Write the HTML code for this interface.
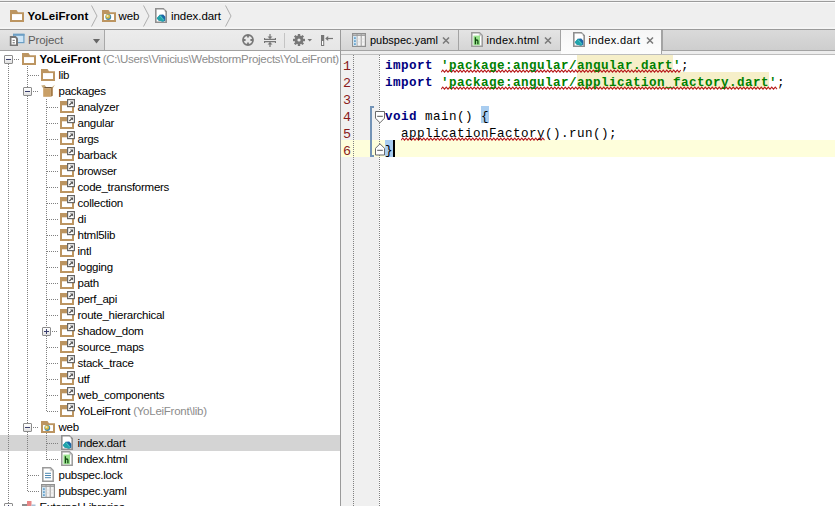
<!DOCTYPE html>
<html><head><meta charset="utf-8">
<style>
*{margin:0;padding:0;box-sizing:border-box}
html,body{width:835px;height:506px;overflow:hidden;background:#fff;font-family:"Liberation Sans",sans-serif;font-size:11px;color:#000}
.a{position:absolute}
#top{left:0;top:0;width:835px;height:29px;background:#efefef}
#top:before{content:"";position:absolute;left:0;top:1px;width:835px;height:1px;background:#9b9b9b}
#top:after{content:"";position:absolute;left:0;top:2px;width:835px;height:1px;background:#fbfbfb}
.bc{top:9px;font-size:11.5px;line-height:14px;white-space:nowrap;color:#000;letter-spacing:-0.05px}
#l29{left:0;top:29px;width:835px;height:1px;background:#9a9a9a}
#phead{left:0;top:30px;width:340px;height:20px;background:linear-gradient(#ececec,#e6e6e6)}
#pbtn{left:0;top:30px;width:104px;height:20px;background:linear-gradient(#e4e4e4,#d6d6d6)}
#l50{left:0;top:50px;width:340px;height:1px;background:#a0a0a0}
#vsep{left:340px;top:30px;width:1px;height:476px;background:#9a9a9a}
#tree{left:0;top:51px;width:340px;height:455px;background:#fff}
.tt{line-height:16px;white-space:nowrap;color:#000;font-size:11.5px;letter-spacing:-0.25px}
.gray{color:#8c8c8c}
.sel{background:#d4d4d4}
.dv{width:1px;background:repeating-linear-gradient(to bottom,#808080 0 1px,transparent 1px 2px)}
.dh{height:1px;background:repeating-linear-gradient(to right,#808080 0 1px,transparent 1px 2px)}
.exp{position:absolute;width:9px;height:9px;border:1px solid #8c8c8c;background:linear-gradient(#fff,#e2e2e2);border-radius:1px}
.exp:before{content:"";position:absolute;left:1px;top:3px;width:5px;height:1px;background:#3a3f6e}
.exp.plus:after{content:"";position:absolute;left:3px;top:1px;width:1px;height:5px;background:#3a3f6e}
#tabs{left:341px;top:30px;width:494px;height:20px;background:linear-gradient(#e2e2e2,#d8d8d8)}
.tab{top:30px;height:21px;background:linear-gradient(#e4e4e4,#d5d5d5);border-right:1px solid #a3a3a3;border-bottom:1px solid #a3a3a3}
.tab.act{background:linear-gradient(#f6f6f6,#fdfdfd);height:25px;border-bottom:none}
.tabt{top:33px;line-height:14px;white-space:nowrap;color:#000}



#code{left:380px;top:55px;width:455px;height:451px;background:#fff}
.ln{position:absolute;left:343px;width:10px;font-family:"Liberation Mono",monospace;font-size:13.4px;letter-spacing:0;line-height:17px;padding-top:3px;color:#8a1a1a}
.cl{position:absolute;left:385px;font-family:"Liberation Mono",monospace;font-size:12.6px;letter-spacing:0.44px;line-height:17px;padding-top:3px;white-space:pre;color:#000}
.kw{color:#000080;font-weight:bold}
.str{color:#008000;font-weight:bold}
.ref{background:#f5eec6}
.wavy{text-decoration:underline wavy #e03030;text-decoration-thickness:1px;text-underline-offset:2px}
.tt.b{font-weight:bold;letter-spacing:0.1px}
.tt.b .gray{font-weight:normal;letter-spacing:-0.3px;margin-left:-1px}
.tab.empty{background:linear-gradient(#dadada,#cecece)}

</style></head><body>
<div id="top" class="a"></div>
<div class="a" style="left:0;top:27px;width:835px;height:2px;background:linear-gradient(#f3f3f3,#f6f6f6)"></div>
<div id="l29" class="a"></div>
<div id="phead" class="a"></div>
<div id="pbtn" class="a"></div>
<div id="l50" class="a"></div>
<div id="tree" class="a"></div>
<div id="vsep" class="a"></div>
<div id="code" class="a"></div>
<svg class="a" style="left:10px;top:10px" width="14" height="12" viewBox="0 0 14 12"><path d="M0 0H6.5L8 2.3H14V12H0Z" fill="#bc9561"/><rect x="2" y="4.1" width="10" height="5.9" fill="#fff"/></svg><div class="a bc" style="left:27.5px;font-weight:bold;letter-spacing:0.1px">YoLeiFront</div><svg class="a" style="left:91px;top:5px" width="7" height="22" viewBox="0 0 7 22"><path d="M0.5 0.5L6 11L0.5 21.5" stroke="#a8a8a8" fill="none" stroke-width="0.9"/></svg><svg class="a" style="left:102px;top:10px" width="14" height="12" viewBox="0 0 14 12"><path d="M0 0H6.5L8 2.3H14V12H0Z" fill="#bc9561"/><rect x="2" y="4.1" width="10" height="5.9" fill="#fff"/><circle cx="6.3" cy="7" r="2.9" fill="#3d86ad"/><circle cx="5.9" cy="6.5" r="2.3" fill="#d4b843"/><circle cx="5.5" cy="6" r="1.1" fill="#f6eebb"/></svg><div class="a bc" style="left:118.5px">web</div><svg class="a" style="left:143px;top:5px" width="7" height="22" viewBox="0 0 7 22"><path d="M0.5 0.5L6 11L0.5 21.5" stroke="#a8a8a8" fill="none" stroke-width="0.9"/></svg><svg class="a" style="left:155px;top:8px" width="12" height="15" viewBox="0 0 12 15"><path d="M0.8 0.8H8.3L11.2 3.7V14.2H0.8Z" fill="#fff" stroke="#8f8f8f" stroke-width="1.6"/><rect x="8.2" y="1.7" width="1.3" height="1.3" fill="#fff"/><path d="M1.8 10.3L4.8 6.8L8.2 6.5L10.3 8.8L10.3 12.8L7.5 13.5L3.6 12.6Z" fill="#1b64a8"/><path d="M1.8 10.3L4.8 6.8L6.2 7.5L9.2 11.2L9 13.4L7.5 13.5L3.6 12.6Z" fill="#22a5a9"/><path d="M5 7.8L8.8 12.2" stroke="#5fc8d8" stroke-width="0.7"/></svg><div class="a bc" style="left:171px">index.dart</div><svg class="a" style="left:225px;top:5px" width="7" height="22" viewBox="0 0 7 22"><path d="M0.5 0.5L6 11L0.5 21.5" stroke="#a8a8a8" fill="none" stroke-width="0.9"/></svg><svg class="a" style="left:9px;top:33px" width="16" height="14" viewBox="0 0 16 14"><rect x="4.6" y="1.4" width="10.3" height="8.2" fill="#cde5f7" stroke="#6b9ec4" stroke-width="1.2"/><rect x="4" y="0.8" width="11.5" height="2" fill="#6b9ec4"/><path d="M0.8 3H6.8L9 5.2V13H0.8Z" fill="#777"/><path d="M2.5 5H6.3L7 5.8V11.5H2.5Z" fill="#fff"/><rect x="3.6" y="6.8" width="2.2" height="1.1" fill="#777"/><rect x="3.6" y="9.2" width="2.2" height="1.1" fill="#777"/></svg><div class="a" style="left:28px;top:33px;line-height:14px;font-size:11.5px;letter-spacing:-0.1px;color:#5c5c5c">Project</div><svg class="a" style="left:93px;top:39px" width="7" height="5" viewBox="0 0 7 5"><path d="M0 0H7L3.5 4.5Z" fill="#666"/></svg><div class="a" style="left:104px;top:30px;width:1px;height:20px;background:#a8a8a8"></div><svg class="a" style="left:242px;top:34px" width="12" height="12" viewBox="0 0 12 12"><circle cx="6" cy="6" r="5" fill="none" stroke="#777" stroke-width="1.8"/><path d="M6 1V3.6M6 8.4V11M1 6H3.6M8.4 6H11" stroke="#777" stroke-width="1.8"/></svg><svg class="a" style="left:264px;top:34px" width="12" height="13" viewBox="0 0 12 13"><path d="M0.5 4V5.3H11.5V4M0.5 9V7.7H11.5V9" stroke="#777" stroke-width="1.2" fill="none"/><path d="M6 0V4.5M6 8.5V13" stroke="#777" stroke-width="1.2"/><path d="M3.5 2.5L6 5L8.5 2.5ZM3.5 10.5L6 8L8.5 10.5Z" fill="#777"/></svg><div class="a" style="left:284px;top:33px;width:1px;height:15px;background:#c4c4c4"></div><svg class="a" style="left:293px;top:34px" width="20" height="12" viewBox="0 0 20 12"><g fill="#777"><circle cx="6" cy="6" r="4.4"/><rect x="4.8" y="0" width="2.4" height="12" transform="rotate(0 6 6)"/><rect x="4.8" y="0" width="2.4" height="12" transform="rotate(45 6 6)"/><rect x="4.8" y="0" width="2.4" height="12" transform="rotate(90 6 6)"/><rect x="4.8" y="0" width="2.4" height="12" transform="rotate(135 6 6)"/></g><circle cx="6" cy="6" r="1.6" fill="#e8e8e8"/><path d="M14.5 5H19L16.75 7.5Z" fill="#777"/></svg><svg class="a" style="left:321px;top:35px" width="13" height="11" viewBox="0 0 13 11"><rect x="0" y="0" width="3.2" height="11" fill="#777"/><rect x="1" y="6" width="1.2" height="4" fill="#fff"/><path d="M5 3.5H12" stroke="#777" stroke-width="1.2"/><path d="M4.2 3.5L7.2 1V6Z" fill="#777"/></svg><div class="a" style="left:0;top:51px;width:340px;height:455px;overflow:hidden"><div class="a" style="left:0;top:-51px;width:340px;height:506px"><div class="a sel" style="left:0;top:435px;width:340px;height:16px"></div>
<div class="a dv" style="left:8px;top:64px;height:439px"></div>
<div class="a dv" style="left:27px;top:66px;height:21px"></div>
<div class="a dv" style="left:27px;top:96px;height:327px"></div>
<div class="a dv" style="left:27px;top:432px;height:60px"></div>
<div class="a dv" style="left:46px;top:99px;height:228px"></div>
<div class="a dv" style="left:46px;top:336px;height:76px"></div>
<div class="a dv" style="left:46px;top:433px;height:27px"></div>
<div class="exp" style="left:4px;top:55px"></div>
<div class="a dh" style="left:14px;top:59px;width:5px"></div>
<svg class="a" style="left:22px;top:53px" width="14" height="12" viewBox="0 0 14 12"><path d="M0 0H6.5L8 2.3H14V12H0Z" fill="#bc9561"/><rect x="2" y="4.1" width="10" height="5.9" fill="#fff"/></svg>
<div class="a tt b" style="left:39.5px;top:51px">YoLeiFront <span class="gray">(C:\Users\Vinicius\WebstormProjects\YoLeiFront)</span></div>
<div class="a dh" style="left:28px;top:75px;width:11px"></div>
<svg class="a" style="left:41px;top:69px" width="14" height="12" viewBox="0 0 14 12"><path d="M0 0H6.5L8 2.3H14V12H0Z" fill="#bc9561"/><rect x="2" y="4.1" width="10" height="5.9" fill="#fff"/></svg>
<div class="a tt" style="left:58.5px;top:67px">lib</div>
<div class="exp" style="left:23px;top:87px"></div>
<div class="a dh" style="left:33px;top:91px;width:5px"></div>
<svg class="a" style="left:41px;top:84px" width="14" height="13" viewBox="0 0 14 13"><path d="M2.2 4.2L0.2 1.6L3.6 0.9L5.6 3.4Z" fill="#c4a879"/><path d="M9.6 4.2L13.8 0.8L12.4 3.4Z" fill="#cbb080"/><path d="M2.2 4.2L4.2 3.1H11.8L9.8 4.2Z" fill="#6e5336"/><rect x="2.2" y="4.2" width="7.6" height="8.6" fill="#c99f66"/><path d="M9.8 4.2L11.8 3.1V11.8L9.8 12.8Z" fill="#a57b47"/></svg>
<div class="a tt" style="left:58.5px;top:83px">packages</div>
<div class="a dh" style="left:47px;top:107px;width:11px"></div>
<svg class="a" style="left:60px;top:99px" width="15" height="14" viewBox="0 0 15 14"><g fill="#bc9561"><rect x="0" y="2" width="7.5" height="4.3"/><rect x="0" y="2" width="2" height="12"/><rect x="0" y="12" width="14" height="2"/><rect x="12" y="7.5" width="2" height="6.5"/></g><rect x="7.6" y="0.6" width="6.8" height="7" fill="#fff" stroke="#666" stroke-width="1.2"/><path d="M9.4 6L11.8 3.6" stroke="#555" stroke-width="1.3"/><path d="M9.9 2.4H13V5.5Z" fill="#555"/></svg>
<div class="a tt" style="left:77.5px;top:99px">analyzer</div>
<div class="a dh" style="left:47px;top:123px;width:11px"></div>
<svg class="a" style="left:60px;top:115px" width="15" height="14" viewBox="0 0 15 14"><g fill="#bc9561"><rect x="0" y="2" width="7.5" height="4.3"/><rect x="0" y="2" width="2" height="12"/><rect x="0" y="12" width="14" height="2"/><rect x="12" y="7.5" width="2" height="6.5"/></g><rect x="7.6" y="0.6" width="6.8" height="7" fill="#fff" stroke="#666" stroke-width="1.2"/><path d="M9.4 6L11.8 3.6" stroke="#555" stroke-width="1.3"/><path d="M9.9 2.4H13V5.5Z" fill="#555"/></svg>
<div class="a tt" style="left:77.5px;top:115px">angular</div>
<div class="a dh" style="left:47px;top:139px;width:11px"></div>
<svg class="a" style="left:60px;top:131px" width="15" height="14" viewBox="0 0 15 14"><g fill="#bc9561"><rect x="0" y="2" width="7.5" height="4.3"/><rect x="0" y="2" width="2" height="12"/><rect x="0" y="12" width="14" height="2"/><rect x="12" y="7.5" width="2" height="6.5"/></g><rect x="7.6" y="0.6" width="6.8" height="7" fill="#fff" stroke="#666" stroke-width="1.2"/><path d="M9.4 6L11.8 3.6" stroke="#555" stroke-width="1.3"/><path d="M9.9 2.4H13V5.5Z" fill="#555"/></svg>
<div class="a tt" style="left:77.5px;top:131px">args</div>
<div class="a dh" style="left:47px;top:155px;width:11px"></div>
<svg class="a" style="left:60px;top:147px" width="15" height="14" viewBox="0 0 15 14"><g fill="#bc9561"><rect x="0" y="2" width="7.5" height="4.3"/><rect x="0" y="2" width="2" height="12"/><rect x="0" y="12" width="14" height="2"/><rect x="12" y="7.5" width="2" height="6.5"/></g><rect x="7.6" y="0.6" width="6.8" height="7" fill="#fff" stroke="#666" stroke-width="1.2"/><path d="M9.4 6L11.8 3.6" stroke="#555" stroke-width="1.3"/><path d="M9.9 2.4H13V5.5Z" fill="#555"/></svg>
<div class="a tt" style="left:77.5px;top:147px">barback</div>
<div class="a dh" style="left:47px;top:171px;width:11px"></div>
<svg class="a" style="left:60px;top:163px" width="15" height="14" viewBox="0 0 15 14"><g fill="#bc9561"><rect x="0" y="2" width="7.5" height="4.3"/><rect x="0" y="2" width="2" height="12"/><rect x="0" y="12" width="14" height="2"/><rect x="12" y="7.5" width="2" height="6.5"/></g><rect x="7.6" y="0.6" width="6.8" height="7" fill="#fff" stroke="#666" stroke-width="1.2"/><path d="M9.4 6L11.8 3.6" stroke="#555" stroke-width="1.3"/><path d="M9.9 2.4H13V5.5Z" fill="#555"/></svg>
<div class="a tt" style="left:77.5px;top:163px">browser</div>
<div class="a dh" style="left:47px;top:187px;width:11px"></div>
<svg class="a" style="left:60px;top:179px" width="15" height="14" viewBox="0 0 15 14"><g fill="#bc9561"><rect x="0" y="2" width="7.5" height="4.3"/><rect x="0" y="2" width="2" height="12"/><rect x="0" y="12" width="14" height="2"/><rect x="12" y="7.5" width="2" height="6.5"/></g><rect x="7.6" y="0.6" width="6.8" height="7" fill="#fff" stroke="#666" stroke-width="1.2"/><path d="M9.4 6L11.8 3.6" stroke="#555" stroke-width="1.3"/><path d="M9.9 2.4H13V5.5Z" fill="#555"/></svg>
<div class="a tt" style="left:77.5px;top:179px">code_transformers</div>
<div class="a dh" style="left:47px;top:203px;width:11px"></div>
<svg class="a" style="left:60px;top:195px" width="15" height="14" viewBox="0 0 15 14"><g fill="#bc9561"><rect x="0" y="2" width="7.5" height="4.3"/><rect x="0" y="2" width="2" height="12"/><rect x="0" y="12" width="14" height="2"/><rect x="12" y="7.5" width="2" height="6.5"/></g><rect x="7.6" y="0.6" width="6.8" height="7" fill="#fff" stroke="#666" stroke-width="1.2"/><path d="M9.4 6L11.8 3.6" stroke="#555" stroke-width="1.3"/><path d="M9.9 2.4H13V5.5Z" fill="#555"/></svg>
<div class="a tt" style="left:77.5px;top:195px">collection</div>
<div class="a dh" style="left:47px;top:219px;width:11px"></div>
<svg class="a" style="left:60px;top:211px" width="15" height="14" viewBox="0 0 15 14"><g fill="#bc9561"><rect x="0" y="2" width="7.5" height="4.3"/><rect x="0" y="2" width="2" height="12"/><rect x="0" y="12" width="14" height="2"/><rect x="12" y="7.5" width="2" height="6.5"/></g><rect x="7.6" y="0.6" width="6.8" height="7" fill="#fff" stroke="#666" stroke-width="1.2"/><path d="M9.4 6L11.8 3.6" stroke="#555" stroke-width="1.3"/><path d="M9.9 2.4H13V5.5Z" fill="#555"/></svg>
<div class="a tt" style="left:77.5px;top:211px">di</div>
<div class="a dh" style="left:47px;top:235px;width:11px"></div>
<svg class="a" style="left:60px;top:227px" width="15" height="14" viewBox="0 0 15 14"><g fill="#bc9561"><rect x="0" y="2" width="7.5" height="4.3"/><rect x="0" y="2" width="2" height="12"/><rect x="0" y="12" width="14" height="2"/><rect x="12" y="7.5" width="2" height="6.5"/></g><rect x="7.6" y="0.6" width="6.8" height="7" fill="#fff" stroke="#666" stroke-width="1.2"/><path d="M9.4 6L11.8 3.6" stroke="#555" stroke-width="1.3"/><path d="M9.9 2.4H13V5.5Z" fill="#555"/></svg>
<div class="a tt" style="left:77.5px;top:227px">html5lib</div>
<div class="a dh" style="left:47px;top:251px;width:11px"></div>
<svg class="a" style="left:60px;top:243px" width="15" height="14" viewBox="0 0 15 14"><g fill="#bc9561"><rect x="0" y="2" width="7.5" height="4.3"/><rect x="0" y="2" width="2" height="12"/><rect x="0" y="12" width="14" height="2"/><rect x="12" y="7.5" width="2" height="6.5"/></g><rect x="7.6" y="0.6" width="6.8" height="7" fill="#fff" stroke="#666" stroke-width="1.2"/><path d="M9.4 6L11.8 3.6" stroke="#555" stroke-width="1.3"/><path d="M9.9 2.4H13V5.5Z" fill="#555"/></svg>
<div class="a tt" style="left:77.5px;top:243px">intl</div>
<div class="a dh" style="left:47px;top:267px;width:11px"></div>
<svg class="a" style="left:60px;top:259px" width="15" height="14" viewBox="0 0 15 14"><g fill="#bc9561"><rect x="0" y="2" width="7.5" height="4.3"/><rect x="0" y="2" width="2" height="12"/><rect x="0" y="12" width="14" height="2"/><rect x="12" y="7.5" width="2" height="6.5"/></g><rect x="7.6" y="0.6" width="6.8" height="7" fill="#fff" stroke="#666" stroke-width="1.2"/><path d="M9.4 6L11.8 3.6" stroke="#555" stroke-width="1.3"/><path d="M9.9 2.4H13V5.5Z" fill="#555"/></svg>
<div class="a tt" style="left:77.5px;top:259px">logging</div>
<div class="a dh" style="left:47px;top:283px;width:11px"></div>
<svg class="a" style="left:60px;top:275px" width="15" height="14" viewBox="0 0 15 14"><g fill="#bc9561"><rect x="0" y="2" width="7.5" height="4.3"/><rect x="0" y="2" width="2" height="12"/><rect x="0" y="12" width="14" height="2"/><rect x="12" y="7.5" width="2" height="6.5"/></g><rect x="7.6" y="0.6" width="6.8" height="7" fill="#fff" stroke="#666" stroke-width="1.2"/><path d="M9.4 6L11.8 3.6" stroke="#555" stroke-width="1.3"/><path d="M9.9 2.4H13V5.5Z" fill="#555"/></svg>
<div class="a tt" style="left:77.5px;top:275px">path</div>
<div class="a dh" style="left:47px;top:299px;width:11px"></div>
<svg class="a" style="left:60px;top:291px" width="15" height="14" viewBox="0 0 15 14"><g fill="#bc9561"><rect x="0" y="2" width="7.5" height="4.3"/><rect x="0" y="2" width="2" height="12"/><rect x="0" y="12" width="14" height="2"/><rect x="12" y="7.5" width="2" height="6.5"/></g><rect x="7.6" y="0.6" width="6.8" height="7" fill="#fff" stroke="#666" stroke-width="1.2"/><path d="M9.4 6L11.8 3.6" stroke="#555" stroke-width="1.3"/><path d="M9.9 2.4H13V5.5Z" fill="#555"/></svg>
<div class="a tt" style="left:77.5px;top:291px">perf_api</div>
<div class="a dh" style="left:47px;top:315px;width:11px"></div>
<svg class="a" style="left:60px;top:307px" width="15" height="14" viewBox="0 0 15 14"><g fill="#bc9561"><rect x="0" y="2" width="7.5" height="4.3"/><rect x="0" y="2" width="2" height="12"/><rect x="0" y="12" width="14" height="2"/><rect x="12" y="7.5" width="2" height="6.5"/></g><rect x="7.6" y="0.6" width="6.8" height="7" fill="#fff" stroke="#666" stroke-width="1.2"/><path d="M9.4 6L11.8 3.6" stroke="#555" stroke-width="1.3"/><path d="M9.9 2.4H13V5.5Z" fill="#555"/></svg>
<div class="a tt" style="left:77.5px;top:307px">route_hierarchical</div>
<div class="exp plus" style="left:42px;top:327px"></div>
<div class="a dh" style="left:52px;top:331px;width:5px"></div>
<svg class="a" style="left:60px;top:323px" width="15" height="14" viewBox="0 0 15 14"><g fill="#bc9561"><rect x="0" y="2" width="7.5" height="4.3"/><rect x="0" y="2" width="2" height="12"/><rect x="0" y="12" width="14" height="2"/><rect x="12" y="7.5" width="2" height="6.5"/></g><rect x="7.6" y="0.6" width="6.8" height="7" fill="#fff" stroke="#666" stroke-width="1.2"/><path d="M9.4 6L11.8 3.6" stroke="#555" stroke-width="1.3"/><path d="M9.9 2.4H13V5.5Z" fill="#555"/></svg>
<div class="a tt" style="left:77.5px;top:323px">shadow_dom</div>
<div class="a dh" style="left:47px;top:347px;width:11px"></div>
<svg class="a" style="left:60px;top:339px" width="15" height="14" viewBox="0 0 15 14"><g fill="#bc9561"><rect x="0" y="2" width="7.5" height="4.3"/><rect x="0" y="2" width="2" height="12"/><rect x="0" y="12" width="14" height="2"/><rect x="12" y="7.5" width="2" height="6.5"/></g><rect x="7.6" y="0.6" width="6.8" height="7" fill="#fff" stroke="#666" stroke-width="1.2"/><path d="M9.4 6L11.8 3.6" stroke="#555" stroke-width="1.3"/><path d="M9.9 2.4H13V5.5Z" fill="#555"/></svg>
<div class="a tt" style="left:77.5px;top:339px">source_maps</div>
<div class="a dh" style="left:47px;top:363px;width:11px"></div>
<svg class="a" style="left:60px;top:355px" width="15" height="14" viewBox="0 0 15 14"><g fill="#bc9561"><rect x="0" y="2" width="7.5" height="4.3"/><rect x="0" y="2" width="2" height="12"/><rect x="0" y="12" width="14" height="2"/><rect x="12" y="7.5" width="2" height="6.5"/></g><rect x="7.6" y="0.6" width="6.8" height="7" fill="#fff" stroke="#666" stroke-width="1.2"/><path d="M9.4 6L11.8 3.6" stroke="#555" stroke-width="1.3"/><path d="M9.9 2.4H13V5.5Z" fill="#555"/></svg>
<div class="a tt" style="left:77.5px;top:355px">stack_trace</div>
<div class="a dh" style="left:47px;top:379px;width:11px"></div>
<svg class="a" style="left:60px;top:371px" width="15" height="14" viewBox="0 0 15 14"><g fill="#bc9561"><rect x="0" y="2" width="7.5" height="4.3"/><rect x="0" y="2" width="2" height="12"/><rect x="0" y="12" width="14" height="2"/><rect x="12" y="7.5" width="2" height="6.5"/></g><rect x="7.6" y="0.6" width="6.8" height="7" fill="#fff" stroke="#666" stroke-width="1.2"/><path d="M9.4 6L11.8 3.6" stroke="#555" stroke-width="1.3"/><path d="M9.9 2.4H13V5.5Z" fill="#555"/></svg>
<div class="a tt" style="left:77.5px;top:371px">utf</div>
<div class="a dh" style="left:47px;top:395px;width:11px"></div>
<svg class="a" style="left:60px;top:387px" width="15" height="14" viewBox="0 0 15 14"><g fill="#bc9561"><rect x="0" y="2" width="7.5" height="4.3"/><rect x="0" y="2" width="2" height="12"/><rect x="0" y="12" width="14" height="2"/><rect x="12" y="7.5" width="2" height="6.5"/></g><rect x="7.6" y="0.6" width="6.8" height="7" fill="#fff" stroke="#666" stroke-width="1.2"/><path d="M9.4 6L11.8 3.6" stroke="#555" stroke-width="1.3"/><path d="M9.9 2.4H13V5.5Z" fill="#555"/></svg>
<div class="a tt" style="left:77.5px;top:387px">web_components</div>
<div class="a dh" style="left:47px;top:411px;width:11px"></div>
<svg class="a" style="left:60px;top:403px" width="15" height="14" viewBox="0 0 15 14"><g fill="#bc9561"><rect x="0" y="2" width="7.5" height="4.3"/><rect x="0" y="2" width="2" height="12"/><rect x="0" y="12" width="14" height="2"/><rect x="12" y="7.5" width="2" height="6.5"/></g><rect x="7.6" y="0.6" width="6.8" height="7" fill="#fff" stroke="#666" stroke-width="1.2"/><path d="M9.4 6L11.8 3.6" stroke="#555" stroke-width="1.3"/><path d="M9.9 2.4H13V5.5Z" fill="#555"/></svg>
<div class="a tt" style="left:77.5px;top:403px">YoLeiFront <span class="gray">(YoLeiFront\lib)</span></div>
<div class="exp" style="left:23px;top:423px"></div>
<div class="a dh" style="left:33px;top:427px;width:5px"></div>
<svg class="a" style="left:41px;top:421px" width="14" height="12" viewBox="0 0 14 12"><path d="M0 0H6.5L8 2.3H14V12H0Z" fill="#bc9561"/><rect x="2" y="4.1" width="10" height="5.9" fill="#fff"/><circle cx="6.3" cy="7" r="2.9" fill="#3d86ad"/><circle cx="5.9" cy="6.5" r="2.3" fill="#d4b843"/><circle cx="5.5" cy="6" r="1.1" fill="#f6eebb"/></svg>
<div class="a tt" style="left:58.5px;top:419px">web</div>
<div class="a dh" style="left:47px;top:443px;width:11px"></div>
<svg class="a" style="left:61px;top:435px" width="12" height="15" viewBox="0 0 12 15"><path d="M0.8 0.8H8.3L11.2 3.7V14.2H0.8Z" fill="#fff" stroke="#8f8f8f" stroke-width="1.6"/><rect x="8.2" y="1.7" width="1.3" height="1.3" fill="#fff"/><path d="M1.8 10.3L4.8 6.8L8.2 6.5L10.3 8.8L10.3 12.8L7.5 13.5L3.6 12.6Z" fill="#1b64a8"/><path d="M1.8 10.3L4.8 6.8L6.2 7.5L9.2 11.2L9 13.4L7.5 13.5L3.6 12.6Z" fill="#22a5a9"/><path d="M5 7.8L8.8 12.2" stroke="#5fc8d8" stroke-width="0.7"/></svg>
<div class="a tt" style="left:77.5px;top:435px">index.dart</div>
<div class="a dh" style="left:47px;top:459px;width:11px"></div>
<svg class="a" style="left:61px;top:451px" width="12" height="15" viewBox="0 0 12 15"><path d="M0.8 0.8H8.5L11.2 3.5V14.2H0.8Z" fill="#fff" stroke="#9a9a9a" stroke-width="1.5"/><path d="M8.3 0.8V3.7H11.2" fill="none" stroke="#bbb" stroke-width="0.8"/><rect x="2.4" y="3.6" width="6.6" height="9.6" fill="#9be38f"/><path d="M4.4 5.2V12.2M4.4 9Q4.4 8 5.7 8Q6.9 8 6.9 9V12.2" stroke="#104a10" stroke-width="1.3" fill="none"/></svg>
<div class="a tt" style="left:77.5px;top:451px">index.html</div>
<div class="a dh" style="left:28px;top:475px;width:11px"></div>
<svg class="a" style="left:42px;top:467px" width="12" height="15" viewBox="0 0 12 15"><path d="M0.8 0.8H8.5L11.2 3.5V14.2H0.8Z" fill="#fff" stroke="#9a9a9a" stroke-width="1.5"/><path d="M8.3 0.8V3.7H11.2" fill="none" stroke="#bbb" stroke-width="0.8"/><path d="M3 6.3H9M3 8.5H9M3 10.7H9" stroke="#4a86b0" stroke-width="1"/></svg>
<div class="a tt" style="left:58.5px;top:467px">pubspec.lock</div>
<div class="a dh" style="left:28px;top:491px;width:11px"></div>
<svg class="a" style="left:41px;top:484px" width="14" height="14" viewBox="0 0 14 14"><rect x="0.6" y="0.6" width="12.8" height="12.8" fill="#f3f3f3" stroke="#8f8f8f" stroke-width="1.2"/><path d="M0.6 2.2H13.4" stroke="#9a9a9a" stroke-width="1.4"/><path d="M5 0.6V13.4M9.2 0.6V13.4" stroke="#9a9a9a" stroke-width="1"/><rect x="1.2" y="3" width="3.3" height="9.8" fill="#cfe4f2"/><rect x="2" y="4.3" width="1.8" height="1.6" fill="#5f9fcc"/><rect x="2" y="7.3" width="1.8" height="1.6" fill="#5f9fcc"/><rect x="2" y="10.3" width="1.8" height="1.6" fill="#5f9fcc"/><path d="M5.5 6H8.7M5.5 9H8.7M9.7 6H12.9M9.7 9H12.9" stroke="#dcdcdc" stroke-width="0.8"/></svg>
<div class="a tt" style="left:58.5px;top:483px">pubspec.yaml</div>
<div class="exp plus" style="left:4px;top:503px"></div>
<div class="a dh" style="left:14px;top:507px;width:5px"></div>
<svg class="a" style="left:22px;top:501px" width="14" height="12" viewBox="0 0 14 12"><rect x="0" y="3" width="5" height="9" fill="#8d8d8d"/><rect x="5" y="0" width="4.5" height="12" fill="#e88686"/><rect x="9.5" y="3.5" width="4" height="8.5" fill="#a9c0d6"/></svg>
<div class="a tt" style="left:39.5px;top:499px">External Libraries</div></div></div><div class="a" style="left:341px;top:30px;width:494px;height:25px;background:#ededed"></div><div class="a tab" style="left:341px;width:118px"></div><svg class="a" style="left:352px;top:33px" width="14" height="14" viewBox="0 0 14 14"><rect x="0.6" y="0.6" width="12.8" height="12.8" fill="#f3f3f3" stroke="#8f8f8f" stroke-width="1.2"/><path d="M0.6 2.2H13.4" stroke="#9a9a9a" stroke-width="1.4"/><path d="M5 0.6V13.4M9.2 0.6V13.4" stroke="#9a9a9a" stroke-width="1"/><rect x="1.2" y="3" width="3.3" height="9.8" fill="#cfe4f2"/><rect x="2" y="4.3" width="1.8" height="1.6" fill="#5f9fcc"/><rect x="2" y="7.3" width="1.8" height="1.6" fill="#5f9fcc"/><rect x="2" y="10.3" width="1.8" height="1.6" fill="#5f9fcc"/><path d="M5.5 6H8.7M5.5 9H8.7M9.7 6H12.9M9.7 9H12.9" stroke="#dcdcdc" stroke-width="0.8"/></svg><div class="a tabt" style="left:370px">pubspec.yaml</div><svg class="a" style="left:442px;top:37px" width="8" height="7" viewBox="0 0 8 7"><path d="M1 0.5L7 6.5M7 0.5L1 6.5" stroke="#7a7a7a" stroke-width="1.5"/></svg><div class="a tab" style="left:459px;width:102px"></div><svg class="a" style="left:471px;top:32px" width="12" height="15" viewBox="0 0 12 15"><path d="M0.8 0.8H8.5L11.2 3.5V14.2H0.8Z" fill="#fff" stroke="#9a9a9a" stroke-width="1.5"/><path d="M8.3 0.8V3.7H11.2" fill="none" stroke="#bbb" stroke-width="0.8"/><rect x="2.4" y="3.6" width="6.6" height="9.6" fill="#9be38f"/><path d="M4.4 5.2V12.2M4.4 9Q4.4 8 5.7 8Q6.9 8 6.9 9V12.2" stroke="#104a10" stroke-width="1.3" fill="none"/></svg><div class="a tabt" style="left:486.5px"><span style="letter-spacing:0.25px">index.html</span></div><svg class="a" style="left:544px;top:37px" width="8" height="7" viewBox="0 0 8 7"><path d="M1 0.5L7 6.5M7 0.5L1 6.5" stroke="#7a7a7a" stroke-width="1.5"/></svg><div class="a tab empty" style="left:662px;width:173px;border-left:1px solid #a3a3a3;border-right:none"></div><div class="a tab act" style="left:561px;width:101px"></div><svg class="a" style="left:573px;top:32px" width="12" height="15" viewBox="0 0 12 15"><path d="M0.8 0.8H8.3L11.2 3.7V14.2H0.8Z" fill="#fff" stroke="#8f8f8f" stroke-width="1.6"/><rect x="8.2" y="1.7" width="1.3" height="1.3" fill="#fff"/><path d="M1.8 10.3L4.8 6.8L8.2 6.5L10.3 8.8L10.3 12.8L7.5 13.5L3.6 12.6Z" fill="#1b64a8"/><path d="M1.8 10.3L4.8 6.8L6.2 7.5L9.2 11.2L9 13.4L7.5 13.5L3.6 12.6Z" fill="#22a5a9"/><path d="M5 7.8L8.8 12.2" stroke="#5fc8d8" stroke-width="0.7"/></svg><div class="a tabt" style="left:588.5px"><span style="letter-spacing:0.35px">index.dart</span></div><svg class="a" style="left:646px;top:37px" width="8" height="7" viewBox="0 0 8 7"><path d="M1 0.5L7 6.5M7 0.5L1 6.5" stroke="#7a7a7a" stroke-width="1.5"/></svg><div class="a" style="left:341px;top:54px;width:494px;height:1px;background:#bdbdbd"></div><div class="a" style="left:341px;top:55px;width:38px;height:451px;background:#f0f0f0"></div><div class="a" style="left:341px;top:140px;width:494px;height:17px;background:#fefedb"></div><div class="a dv" style="left:353px;top:55px;height:451px"></div><div class="a dv" style="left:379px;top:55px;height:451px"></div><div class="ln" style="top:55px">1</div><div class="ln" style="top:72px">2</div><div class="ln" style="top:89px">3</div><div class="ln" style="top:106px">4</div><div class="ln" style="top:123px">5</div><div class="ln" style="top:140px">6</div><div class="a" style="left:370px;top:106px;width:4px;height:51px;border:2px solid #7393b6;border-right:none"></div><svg class="a" style="left:375px;top:111px" width="10" height="13" viewBox="0 0 10 13"><path d="M0.5 0.5H9.5V7.2L5 11.8L0.5 7.2Z" fill="#fff" stroke="#6a6a6a" stroke-width="1"/><path d="M2.2 5.3H7.8" stroke="#555" stroke-width="1"/></svg><svg class="a" style="left:375px;top:143px" width="10" height="13" viewBox="0 0 10 13"><path d="M0.5 12H9.5V5.3L5 0.8L0.5 5.3Z" fill="#fff" stroke="#6a6a6a" stroke-width="1"/><path d="M2.2 7.3H7.8" stroke="#555" stroke-width="1"/></svg><div class="a" style="left:577px;top:55px;width:96px;height:17px;background:#f6efc9"></div><div class="a" style="left:577px;top:72px;width:192px;height:17px;background:#f6efc9"></div><div class="a" style="left:481px;top:106px;width:8px;height:17px;background:#a9cdf0"></div><div class="a" style="left:385px;top:140px;width:8px;height:17px;background:#a9cdf0"></div><svg class="a" style="left:441px;top:69px" width="241" height="4" viewBox="0 0 241 4"><polyline points="0.00,3.2 1.75,1.1 3.50,3.2 5.25,1.1 7.00,3.2 8.75,1.1 10.50,3.2 12.25,1.1 14.00,3.2 15.75,1.1 17.50,3.2 19.25,1.1 21.00,3.2 22.75,1.1 24.50,3.2 26.25,1.1 28.00,3.2 29.75,1.1 31.50,3.2 33.25,1.1 35.00,3.2 36.75,1.1 38.50,3.2 40.25,1.1 42.00,3.2 43.75,1.1 45.50,3.2 47.25,1.1 49.00,3.2 50.75,1.1 52.50,3.2 54.25,1.1 56.00,3.2 57.75,1.1 59.50,3.2 61.25,1.1 63.00,3.2 64.75,1.1 66.50,3.2 68.25,1.1 70.00,3.2 71.75,1.1 73.50,3.2 75.25,1.1 77.00,3.2 78.75,1.1 80.50,3.2 82.25,1.1 84.00,3.2 85.75,1.1 87.50,3.2 89.25,1.1 91.00,3.2 92.75,1.1 94.50,3.2 96.25,1.1 98.00,3.2 99.75,1.1 101.50,3.2 103.25,1.1 105.00,3.2 106.75,1.1 108.50,3.2 110.25,1.1 112.00,3.2 113.75,1.1 115.50,3.2 117.25,1.1 119.00,3.2 120.75,1.1 122.50,3.2 124.25,1.1 126.00,3.2 127.75,1.1 129.50,3.2 131.25,1.1 133.00,3.2 134.75,1.1 136.50,3.2 138.25,1.1 140.00,3.2 141.75,1.1 143.50,3.2 145.25,1.1 147.00,3.2 148.75,1.1 150.50,3.2 152.25,1.1 154.00,3.2 155.75,1.1 157.50,3.2 159.25,1.1 161.00,3.2 162.75,1.1 164.50,3.2 166.25,1.1 168.00,3.2 169.75,1.1 171.50,3.2 173.25,1.1 175.00,3.2 176.75,1.1 178.50,3.2 180.25,1.1 182.00,3.2 183.75,1.1 185.50,3.2 187.25,1.1 189.00,3.2 190.75,1.1 192.50,3.2 194.25,1.1 196.00,3.2 197.75,1.1 199.50,3.2 201.25,1.1 203.00,3.2 204.75,1.1 206.50,3.2 208.25,1.1 210.00,3.2 211.75,1.1 213.50,3.2 215.25,1.1 217.00,3.2 218.75,1.1 220.50,3.2 222.25,1.1 224.00,3.2 225.75,1.1 227.50,3.2 229.25,1.1 231.00,3.2 232.75,1.1 234.50,3.2 236.25,1.1 238.00,3.2 239.75,1.1" fill="none" stroke="#b81c1c" stroke-width="1.05"/></svg><svg class="a" style="left:441px;top:86px" width="337" height="4" viewBox="0 0 337 4"><polyline points="0.00,3.2 1.75,1.1 3.50,3.2 5.25,1.1 7.00,3.2 8.75,1.1 10.50,3.2 12.25,1.1 14.00,3.2 15.75,1.1 17.50,3.2 19.25,1.1 21.00,3.2 22.75,1.1 24.50,3.2 26.25,1.1 28.00,3.2 29.75,1.1 31.50,3.2 33.25,1.1 35.00,3.2 36.75,1.1 38.50,3.2 40.25,1.1 42.00,3.2 43.75,1.1 45.50,3.2 47.25,1.1 49.00,3.2 50.75,1.1 52.50,3.2 54.25,1.1 56.00,3.2 57.75,1.1 59.50,3.2 61.25,1.1 63.00,3.2 64.75,1.1 66.50,3.2 68.25,1.1 70.00,3.2 71.75,1.1 73.50,3.2 75.25,1.1 77.00,3.2 78.75,1.1 80.50,3.2 82.25,1.1 84.00,3.2 85.75,1.1 87.50,3.2 89.25,1.1 91.00,3.2 92.75,1.1 94.50,3.2 96.25,1.1 98.00,3.2 99.75,1.1 101.50,3.2 103.25,1.1 105.00,3.2 106.75,1.1 108.50,3.2 110.25,1.1 112.00,3.2 113.75,1.1 115.50,3.2 117.25,1.1 119.00,3.2 120.75,1.1 122.50,3.2 124.25,1.1 126.00,3.2 127.75,1.1 129.50,3.2 131.25,1.1 133.00,3.2 134.75,1.1 136.50,3.2 138.25,1.1 140.00,3.2 141.75,1.1 143.50,3.2 145.25,1.1 147.00,3.2 148.75,1.1 150.50,3.2 152.25,1.1 154.00,3.2 155.75,1.1 157.50,3.2 159.25,1.1 161.00,3.2 162.75,1.1 164.50,3.2 166.25,1.1 168.00,3.2 169.75,1.1 171.50,3.2 173.25,1.1 175.00,3.2 176.75,1.1 178.50,3.2 180.25,1.1 182.00,3.2 183.75,1.1 185.50,3.2 187.25,1.1 189.00,3.2 190.75,1.1 192.50,3.2 194.25,1.1 196.00,3.2 197.75,1.1 199.50,3.2 201.25,1.1 203.00,3.2 204.75,1.1 206.50,3.2 208.25,1.1 210.00,3.2 211.75,1.1 213.50,3.2 215.25,1.1 217.00,3.2 218.75,1.1 220.50,3.2 222.25,1.1 224.00,3.2 225.75,1.1 227.50,3.2 229.25,1.1 231.00,3.2 232.75,1.1 234.50,3.2 236.25,1.1 238.00,3.2 239.75,1.1 241.50,3.2 243.25,1.1 245.00,3.2 246.75,1.1 248.50,3.2 250.25,1.1 252.00,3.2 253.75,1.1 255.50,3.2 257.25,1.1 259.00,3.2 260.75,1.1 262.50,3.2 264.25,1.1 266.00,3.2 267.75,1.1 269.50,3.2 271.25,1.1 273.00,3.2 274.75,1.1 276.50,3.2 278.25,1.1 280.00,3.2 281.75,1.1 283.50,3.2 285.25,1.1 287.00,3.2 288.75,1.1 290.50,3.2 292.25,1.1 294.00,3.2 295.75,1.1 297.50,3.2 299.25,1.1 301.00,3.2 302.75,1.1 304.50,3.2 306.25,1.1 308.00,3.2 309.75,1.1 311.50,3.2 313.25,1.1 315.00,3.2 316.75,1.1 318.50,3.2 320.25,1.1 322.00,3.2 323.75,1.1 325.50,3.2 327.25,1.1 329.00,3.2 330.75,1.1 332.50,3.2 334.25,1.1 336.00,3.2" fill="none" stroke="#b81c1c" stroke-width="1.05"/></svg><svg class="a" style="left:401px;top:137px" width="145" height="4" viewBox="0 0 145 4"><polyline points="0.00,3.2 1.75,1.1 3.50,3.2 5.25,1.1 7.00,3.2 8.75,1.1 10.50,3.2 12.25,1.1 14.00,3.2 15.75,1.1 17.50,3.2 19.25,1.1 21.00,3.2 22.75,1.1 24.50,3.2 26.25,1.1 28.00,3.2 29.75,1.1 31.50,3.2 33.25,1.1 35.00,3.2 36.75,1.1 38.50,3.2 40.25,1.1 42.00,3.2 43.75,1.1 45.50,3.2 47.25,1.1 49.00,3.2 50.75,1.1 52.50,3.2 54.25,1.1 56.00,3.2 57.75,1.1 59.50,3.2 61.25,1.1 63.00,3.2 64.75,1.1 66.50,3.2 68.25,1.1 70.00,3.2 71.75,1.1 73.50,3.2 75.25,1.1 77.00,3.2 78.75,1.1 80.50,3.2 82.25,1.1 84.00,3.2 85.75,1.1 87.50,3.2 89.25,1.1 91.00,3.2 92.75,1.1 94.50,3.2 96.25,1.1 98.00,3.2 99.75,1.1 101.50,3.2 103.25,1.1 105.00,3.2 106.75,1.1 108.50,3.2 110.25,1.1 112.00,3.2 113.75,1.1 115.50,3.2 117.25,1.1 119.00,3.2 120.75,1.1 122.50,3.2 124.25,1.1 126.00,3.2 127.75,1.1 129.50,3.2 131.25,1.1 133.00,3.2 134.75,1.1 136.50,3.2 138.25,1.1 140.00,3.2 141.75,1.1 143.50,3.2" fill="none" stroke="#b81c1c" stroke-width="1.05"/></svg><div class="cl" style="top:55px"><span class="kw">import</span> <span class="str">'package:angular/angular.dart'</span>;</div><div class="cl" style="top:72px"><span class="kw">import</span> <span class="str">'package:angular/application_factory.dart'</span>;</div><div class="cl" style="top:106px"><span class="kw">void</span> main() {</div><div class="cl" style="top:123px">  applicationFactory().run();</div><div class="cl" style="top:140px">}</div><div class="a" style="left:393px;top:140px;width:2px;height:17px;background:#000"></div>
</body></html>
